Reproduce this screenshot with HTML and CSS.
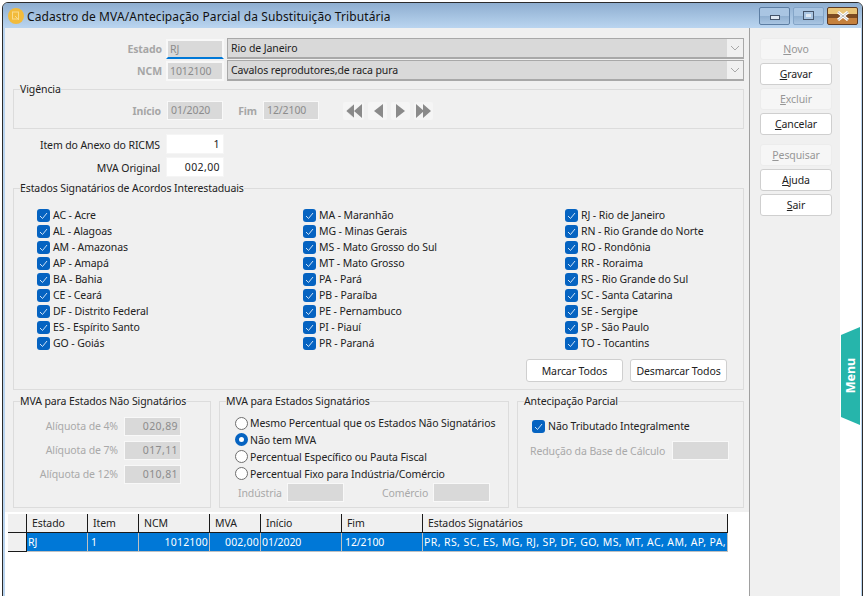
FILE: index.html
```html
<!DOCTYPE html>
<html lang="pt-BR">
<head>
<meta charset="utf-8">
<title>Cadastro de MVA</title>
<link rel="stylesheet" href="styles.css">
</head>
<body>
<div class="window">
  <div class="titlebar">
    <svg class="app-icon" width="16" height="16" viewBox="0 0 16 16"><circle cx="8" cy="8" r="8" fill="#f2bb3c"/><rect x="4.5" y="4" width="6" height="7" fill="none" stroke="#f9dc8e" stroke-width="1"/><path d="M7 8l4 4" stroke="#f9dc8e"/></svg>
    <span class="title">Cadastro de MVA/Antecipação Parcial da Substituição Tributária</span>
    <div class="caption-btns">
      <div class="cap cap-min"><span class="glyph-min"></span></div>
      <div class="cap cap-max"><span class="glyph-max"></span></div>
      <div class="cap cap-close"><svg width="18" height="10" viewBox="0 0 18 10"><path d="M4 1l10 8M14 1L4 9" stroke="#fff" stroke-width="3"/><path d="M4 1l10 8M14 1L4 9" stroke="#8c8c8c" stroke-width=".6"/></svg></div>
    </div>
  </div>
  <div class="client">
    <div class="main">
      <div class="form">
        <div class="row row-estado">
          <label class="lbl-bold w-estado">Estado</label>
          <div class="input dis active w-code">RJ</div>
          <div class="combo">Rio de Janeiro<span class="arrow"><svg width="10" height="6" viewBox="0 0 10 6"><path d="M1 1l4 4 4-4" fill="none" stroke="#a8a8a8"/></svg></span></div>
        </div>
        <div class="row row-ncm">
          <label class="lbl-bold w-estado">NCM</label>
          <div class="input dis w-code">1012100</div>
          <div class="combo">Cavalos reprodutores,de raca pura<span class="arrow"><svg width="10" height="6" viewBox="0 0 10 6"><path d="M1 1l4 4 4-4" fill="none" stroke="#a8a8a8"/></svg></span></div>
        </div>

        <fieldset class="group g-vig">
          <legend>Vigência</legend>
          <div class="vig-row">
            <label class="lbl-bold w-ini">Início</label>
            <div class="input dis small">01/2020</div>
            <label class="lbl-bold w-fim">Fim</label>
            <div class="input dis small">12/2100</div>
            <div class="nav">
              <span class="navb wide"><svg width="17" height="14" viewBox="0 0 17 14"><path d="M9 0v14L1 7zM17 0v14L9 7z" fill="#8a8a8a"/><path d="M9 0L1 7l8 7" fill="none" stroke="#f5f5f5" stroke-width=".6"/></svg></span>
              <span class="navb"><svg width="12" height="14" viewBox="0 0 12 14"><path d="M11 0v14L2 7z" fill="#8a8a8a"/></svg></span>
              <span class="navb"><svg width="12" height="14" viewBox="0 0 12 14"><path d="M1 0v14l9-7z" fill="#8a8a8a"/></svg></span>
              <span class="navb"><svg width="15" height="14" viewBox="0 0 15 14"><path d="M0 0v14l8-7zM7 0v14l8-7z" fill="#8a8a8a"/></svg></span>
            </div>
          </div>
        </fieldset>

        <div class="row row-item">
          <label class="lbl w-item">Item do Anexo do RICMS</label>
          <div class="input num">1</div>
        </div>
        <div class="row row-mva">
          <label class="lbl w-item">MVA Original</label>
          <div class="input num">002,00</div>
        </div>

        <fieldset class="group g-est">
          <legend>Estados Signatários de Acordos Interestaduais</legend>
          <div class="states">
            <div class="chk"><i class="box"></i>AC - Acre</div>
            <div class="chk"><i class="box"></i>MA - Maranhão</div>
            <div class="chk"><i class="box"></i>RJ - Rio de Janeiro</div>
            <div class="chk"><i class="box"></i>AL - Alagoas</div>
            <div class="chk"><i class="box"></i>MG - Minas Gerais</div>
            <div class="chk"><i class="box"></i>RN - Rio Grande do Norte</div>
            <div class="chk"><i class="box"></i>AM - Amazonas</div>
            <div class="chk"><i class="box"></i>MS - Mato Grosso do Sul</div>
            <div class="chk"><i class="box"></i>RO - Rondônia</div>
            <div class="chk"><i class="box"></i>AP - Amapá</div>
            <div class="chk"><i class="box"></i>MT - Mato Grosso</div>
            <div class="chk"><i class="box"></i>RR - Roraima</div>
            <div class="chk"><i class="box"></i>BA - Bahia</div>
            <div class="chk"><i class="box"></i>PA - Pará</div>
            <div class="chk"><i class="box"></i>RS - Rio Grande do Sul</div>
            <div class="chk"><i class="box"></i>CE - Ceará</div>
            <div class="chk"><i class="box"></i>PB - Paraíba</div>
            <div class="chk"><i class="box"></i>SC - Santa Catarina</div>
            <div class="chk"><i class="box"></i>DF - Distrito Federal</div>
            <div class="chk"><i class="box"></i>PE - Pernambuco</div>
            <div class="chk"><i class="box"></i>SE - Sergipe</div>
            <div class="chk"><i class="box"></i>ES - Espírito Santo</div>
            <div class="chk"><i class="box"></i>PI - Piauí</div>
            <div class="chk"><i class="box"></i>SP - São Paulo</div>
            <div class="chk"><i class="box"></i>GO - Goiás</div>
            <div class="chk"><i class="box"></i>PR - Paraná</div>
            <div class="chk"><i class="box"></i>TO - Tocantins</div>
          </div>
          <div class="mark-row">
            <button class="btn mark">Marcar Todos</button>
            <button class="btn mark">Desmarcar Todos</button>
          </div>
        </fieldset>

        <div class="bottom">
          <fieldset class="group g-nao">
            <legend>MVA para Estados Não Signatários</legend>
            <div class="aliq"><label class="lbl-dis">Alíquota de 4%</label><div class="input dis num">020,89</div></div>
            <div class="aliq"><label class="lbl-dis">Alíquota de 7%</label><div class="input dis num">017,11</div></div>
            <div class="aliq"><label class="lbl-dis">Alíquota de 12%</label><div class="input dis num">010,81</div></div>
          </fieldset>
          <fieldset class="group g-sig">
            <legend>MVA para Estados Signatários</legend>
            <div class="radio first"><i class="rad"></i>Mesmo Percentual que os Estados Não Signatários</div>
            <div class="radio"><i class="rad on"></i>Não tem MVA</div>
            <div class="radio"><i class="rad"></i>Percentual Específico ou Pauta Fiscal</div>
            <div class="radio"><i class="rad"></i>Percentual Fixo para Indústria/Comércio</div>
            <div class="ind-row">
              <label class="lbl-dis ind-l">Indústria</label><div class="input dis blank"></div>
              <label class="lbl-dis com">Comércio</label><div class="input dis blank"></div>
            </div>
          </fieldset>
          <fieldset class="group g-ant">
            <legend>Antecipação Parcial</legend>
            <div class="chk chk-ant"><i class="box"></i>Não Tributado Integralmente</div>
            <div class="red-row"><label class="lbl-dis red-l">Redução da Base de Cálculo</label><div class="input dis blank"></div></div>
          </fieldset>
        </div>
      </div>
      <div class="grid-area">
        <table class="grid">
          <colgroup><col class="c0"><col class="c1"><col class="c2"><col class="c3"><col class="c4"><col class="c5"><col class="c6"><col class="c7"></colgroup>
          <thead><tr><th class="ind"></th><th>Estado</th><th>Item</th><th>NCM</th><th>MVA</th><th>Início</th><th>Fim</th><th>Estados Signatários</th></tr></thead>
          <tbody><tr><td class="ind"></td><td>RJ</td><td class="p3">1</td><td class="r">1012100</td><td class="r">002,00</td><td>01/2020</td><td class="p3">12/2100</td><td class="list">PR, RS, SC, ES, MG, RJ, SP, DF, GO, MS, MT, AC, AM, AP, PA,</td></tr></tbody>
        </table>
      </div>
    </div>
    <div class="side">
      <button class="btn sb" disabled><u>N</u>ovo</button>
      <button class="btn sb"><u>G</u>ravar</button>
      <button class="btn sb" disabled><u>E</u>xcluir</button>
      <button class="btn sb"><u>C</u>ancelar</button>
      <button class="btn sb sb-gap" disabled><u>P</u>esquisar</button>
      <button class="btn sb"><u>A</u>juda</button>
      <button class="btn sb"><u>S</u>air</button>
    </div>
    <div class="strip"><div class="menu-tab"><span>Menu</span></div></div>
  </div>
</div>
</body>
</html>
```

FILE: styles.css
```css
* { box-sizing: border-box; }
html, body { margin: 0; padding: 0; }
body {
  width: 865px; height: 596px; overflow: hidden; background: #fff;
  font-family: "Noto Sans", Tahoma, sans-serif; font-size: 10.5px; letter-spacing: -0.1px; color: #222;
}
.window {
  margin: 2px 2px 0 2px; height: 620px;
  border: 1px solid #2b2b2b; border-radius: 6px 6px 0 0;
  background: #b9d4ef; padding: 0 1px 0 2px;
  display: flex; flex-direction: column;
}
.titlebar {
  height: 25px; margin: 0 -1px 0 -2px; padding: 0 4px 0 5px;
  display: flex; align-items: center; flex: none;
  background: linear-gradient(#8eaed0, #bad5f0); border-radius: 5px 5px 0 0;
}
.app-icon { flex: none; margin-right: 3px; }
.title { font-size: 12px; letter-spacing: 0.1px; color: #111; flex: 1; white-space: nowrap; position: relative; top: 1px; }
.caption-btns { display: flex; gap: 3px; }
.cap {
  width: 31px; height: 18px; border: 1px solid #5d7ea3; border-radius: 2px;
  display: flex; align-items: center; justify-content: center;
  background: linear-gradient(#a9c5e2 50%, #8fafd0 50%, #a9c5e2);
}
.cap-max { border-color: #84a5c8; }
.cap-close { border-color: #5d3a24; background: linear-gradient(#e9c478 40%, #7c4a22 40%, #7c4a22 60%, #c5813e 60%); }
.glyph-min { width: 10px; height: 5px; background: #dfe8f2; border: 1px solid #44546a; margin-top: 3px; }
.glyph-max { width: 11px; height: 9px; border: 1px solid #44546a; background: #dfe8f2; box-shadow: inset 0 0 0 2px #a9c5e2; }
.client { flex: 1; display: flex; min-height: 0; }
.main { width: 744px; flex: none; display: flex; flex-direction: column; background: #f0f0f0; }
.form { height: 484px; flex: none; padding: 10px 5px 0 8px; }
.row { display: flex; align-items: center; }
.row-estado { height: 21px; margin-bottom: 1px; }
.row-ncm { height: 21px; margin-bottom: 1px; }
.lbl-bold { font-weight: 700; color: #a6a6a6; text-align: right; }
.lbl { text-align: right; color: #222; padding-top: 2px; }
.lbl-dis { color: #a9a9a9; }
.w-estado { width: 150px; margin-right: 4px; }
.input {
  height: 20px; line-height: 18px; padding: 0 3px; background: #fff; border: 1px solid #f5f5f5;
  white-space: nowrap; flex: none;
}
.dis { background: #d9d9d9; border-color: #f8f8f8; color: #8c8c8c; }
.w-code { width: 58px; margin-right: 3px; border: 2px solid #f8f8f8; line-height: 16px; padding: 0 2px; }
.active { border-bottom: 2px solid #0078d7; }
.combo {
  flex: none; width: 517px; height: 21px; line-height: 18px; padding-left: 3px; position: relative;
  background: #d9d9d9; border: 1px solid #a8a8a8; border-width: 1px 1px 2px 1px;
}
.arrow {
  position: absolute; right: 0; top: 0; bottom: 0; width: 16px; background: #f0f0f0;
  display: flex; align-items: center; justify-content: center;
}
.group { margin: 0; padding: 0; min-width: 0; border: 1px solid #dcdcdc; }
.group legend { padding: 0; margin-left: 6px; line-height: 14px; color: #222; }
.g-vig { width: 731px; height: 47px; }
.vig-row { display: flex; align-items: center; margin-top: 5px; }
.w-ini { width: 147px; margin-right: 6px; }
.w-fim { width: 34px; margin-right: 6px; }
.small { width: 56px; height: 19px; line-height: 17px; }
.nav { display: flex; gap: 4px; margin-left: 24px; }
.navb { width: 19px; height: 18px; display: flex; align-items: center; justify-content: center; background: #f5f5f5; border-radius: 2px; }
.navb.wide { width: 21px; }
.w-item { width: 147px; margin-right: 6px; }
.num { width: 58px; text-align: right; padding-right: 3px; letter-spacing: 0.4px; }
.row-item { margin: 5px 0 3px; height: 20px; }
.row-mva { height: 20px; margin-bottom: 4px; }
.g-est { width: 731px; height: 209px; }
.states {
  display: grid; grid-template-columns: 266px 262px 1fr; grid-auto-rows: 16px;
  padding: 12px 0 0 23px;
}
.chk { display: flex; align-items: center; height: 16px; white-space: nowrap; }
.box {
  width: 13px; height: 13px; margin-right: 3px; flex: none; background: #0563c1 center/9px 9px no-repeat; border-radius: 3px;
  background-image: url("data:image/svg+xml,%3Csvg xmlns='http://www.w3.org/2000/svg' viewBox='0 0 9 9'%3E%3Cpath d='M1 5l2.5 2.5L8 2' fill='none' stroke='%23cfe3f7'/%3E%3C/svg%3E");
}
.mark-row { display: flex; gap: 7px; padding-left: 512px; margin-top: 8px; }
.btn {
  font: inherit; letter-spacing: inherit; color: #222; background: #fff; border: 1px solid #cfcfcf; border-radius: 3px; padding: 0;
}
.mark { width: 97px; height: 23px; }
.bottom { display: flex; gap: 8px; margin-top: 4px; }
.bottom .group { height: 114px; }
.g-nao { width: 198px; }
.g-sig { width: 290px; }
.g-ant { width: 227px; }
.aliq { display: flex; align-items: center; justify-content: flex-end; height: 24px; padding-right: 29px; gap: 6px; }
.aliq:first-of-type { margin-top: 6px; }
.aliq .input { width: 57px; height: 19px; line-height: 17px; padding-right: 2px; }
.radio { display: flex; align-items: center; height: 17px; padding-left: 15px; white-space: nowrap; }
.radio.first { margin-top: 7px; height: 16px; }
.rad {
  width: 13px; height: 13px; border-radius: 50%; border: 1px solid #6e6e6e; background: #fff; margin-right: 2px; flex: none;
}
.rad.on { border: 4px solid #0563c1; }
.ind-row { display: flex; align-items: center; padding: 1px 0 0 18px; }
.blank { width: 57px; height: 19px; }
.ind-l { width: 43px; margin-right: 6px; }
.com { width: 45px; margin: 0 6px 0 38px; }
.chk-ant { padding-left: 14px; margin-top: 10px; }
.red-row { display: flex; align-items: center; padding: 7px 0 0 12px; gap: 8px; }
.red-l { width: 134px; white-space: nowrap; }
.grid-area { flex: 1; background: #fff; padding: 2px 0 0 3px; }
.grid { border-collapse: separate; border-spacing: 0; table-layout: fixed; width: 720px; }
.c0 { width: 19px; } .c1 { width: 61px; } .c2 { width: 51px; } .c3 { width: 71px; }
.c4 { width: 51px; } .c5 { width: 81px; } .c6 { width: 81px; } .c7 { width: 305px; }
.grid th {
  height: 19px; padding: 0 4px 0 5px; font-weight: 400; text-align: left; background: #f0f0f0;
  border-right: 1px solid #1a1a1a; border-bottom: 1px solid #1a1a1a; white-space: nowrap; overflow: hidden;
}
.grid td {
  height: 19px; padding: 0 1px; background: #0078d7; color: #fff; white-space: nowrap; overflow: hidden;
  border-right: 1px solid #c0c0c0; border-bottom: 1px solid #c0c0c0;
}
.grid td.r { text-align: right; letter-spacing: 0.2px; }
.grid td.p3 { padding-left: 3px; }
.grid td.list { letter-spacing: 0.4px; }
.grid td.ind { background: #f0f0f0; border-right: 1px solid #1a1a1a; border-bottom: 1px solid #1a1a1a; }
.side { width: 91px; flex: none; background: #f0f0f0; border-left: 1px solid #a0a0a0; padding: 10px 0 0 10px; display: flex; flex-direction: column; gap: 3px; }
.sb { width: 72px; height: 22px; flex: none; }
.sb:disabled { background: #f6f6f6; border-color: #ececec; color: #969696; }
.sb-gap { margin-top: 6px; }
.strip { flex: 1; background: #fff; position: relative; }
.menu-tab {
  position: absolute; right: 1px; top: 299px; width: 19px; height: 98px; background: #26b5ab;
  clip-path: polygon(0 8px, 100% 0, 100% 100%, 0 90px);
  display: flex; align-items: center; justify-content: center; padding-bottom: 2px;
}
.menu-tab span { transform: rotate(-90deg); color: #fff; font-weight: 700; font-size: 12.5px; letter-spacing: 0; }
```
